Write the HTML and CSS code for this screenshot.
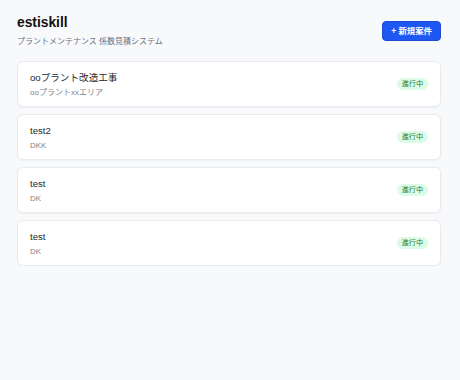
FILE: index.html
```html
<!DOCTYPE html>
<html lang="ja">
<head>
<meta charset="utf-8">
<link rel="stylesheet" href="styles.css">
</head>
<body>
<div class="page">
  <header class="header">
    <div class="brand">
      <h1 class="title">estiskill</h1>
      <p class="subtitle">プラントメンテナンス 係数見積システム</p>
    </div>
    <button class="new-btn">+ 新規案件</button>
  </header>
  <ul class="list">
    <li class="card">
      <div class="card-text">
        <div class="card-title">ooプラント改造工事</div>
        <div class="card-sub">ooプラントxxエリア</div>
      </div>
      <span class="badge">進行中</span>
    </li>
    <li class="card">
      <div class="card-text">
        <div class="card-title">test2</div>
        <div class="card-sub">DKK</div>
      </div>
      <span class="badge">進行中</span>
    </li>
    <li class="card">
      <div class="card-text">
        <div class="card-title">test</div>
        <div class="card-sub">DK</div>
      </div>
      <span class="badge">進行中</span>
    </li>
    <li class="card">
      <div class="card-text">
        <div class="card-title">test</div>
        <div class="card-sub">DK</div>
      </div>
      <span class="badge">進行中</span>
    </li>
  </ul>
</div>
</body>
</html>
```

FILE: styles.css
```css
* { box-sizing: border-box; }
html, body {
  margin: 0;
  padding: 0;
  background: #f8f9fb;
  font-family: "Liberation Sans", "Noto Sans CJK JP", sans-serif;
  color: #111827;
}
.page {
  width: 424px;
  margin-left: 17px;
  padding-top: 13px;
}
.header {
  display: flex;
  justify-content: space-between;
  align-items: flex-start;
  margin-bottom: 13px;
}
.title {
  margin: 0;
  font-size: 13.8px;
  line-height: 20px;
  font-weight: 700;
  color: #111111;
}
.subtitle {
  margin: 3px 0 0;
  font-size: 8px;
  line-height: 12px;
  color: #6b7280;
}
.new-btn {
  margin-top: 8px;
  background: #1f57f2;
  color: #fff;
  border: 1px solid #1a4bd6;
  border-radius: 4px;
  height: 20px;
  padding: 0 8px;
  font-family: inherit;
  font-size: 8.4px;
  font-weight: 700;
  line-height: 12px;
}
.list {
  list-style: none;
  margin: 0;
  padding: 0;
  display: flex;
  flex-direction: column;
  gap: 7px;
}
.card {
  background: #fff;
  border: 1px solid #e8eaee;
  border-radius: 6px;
  box-shadow: 0 1px 2px rgba(0,0,0,0.04);
  height: 46px;
  padding: 0 12px;
  display: flex;
  align-items: center;
  justify-content: space-between;
}
.card-text {
  display: flex;
  flex-direction: column;
  gap: 3px;
}
.card-title {
  font-size: 9.6px;
  line-height: 13px;
  color: #262a30;
}
.card-sub {
  font-size: 8px;
  line-height: 11px;
  color: #80858d;
}
.badge {
  background: #dcfce7;
  color: #15803d;
  font-size: 7.2px;
  line-height: 12px;
  padding: 0 4.8px;
  border-radius: 999px;
}
```
